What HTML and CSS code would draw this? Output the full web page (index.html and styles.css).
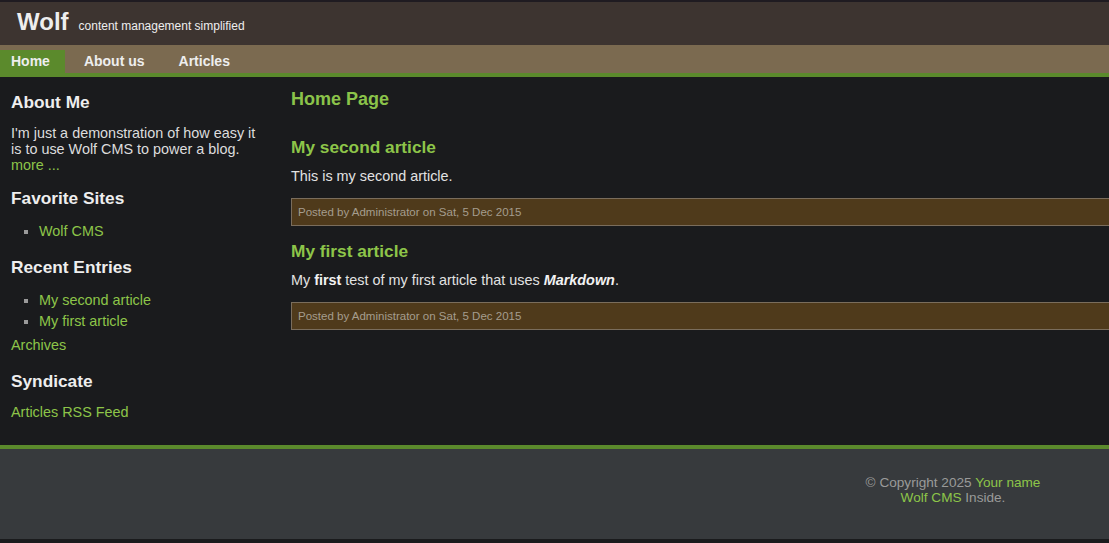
FILE: index.html
```html
<!DOCTYPE html>
<html lang="en">
<head>
<meta charset="utf-8">
<title>Wolf - Home Page</title>
<link rel="stylesheet" href="styles.css">
</head>
<body>
<header class="header">
  <a class="logo" href="#">Wolf</a>
  <span class="tagline">content management simplified</span>
</header>
<nav class="nav">
  <a class="nav-link current" href="#">Home</a>
  <a class="nav-link" href="#">About us</a>
  <a class="nav-link" href="#">Articles</a>
</nav>
<div class="wrap">
  <aside class="sidebar">
    <h2 class="side-title first">About Me</h2>
    <p class="side-text">I'm just a demonstration of how easy it is to use Wolf CMS to power a blog.<br><a href="#">more ...</a></p>
    <h2 class="side-title">Favorite Sites</h2>
    <ul class="side-list">
      <li><a href="#">Wolf CMS</a></li>
    </ul>
    <h2 class="side-title">Recent Entries</h2>
    <ul class="side-list">
      <li><a href="#">My second article</a></li>
      <li><a href="#">My first article</a></li>
    </ul>
    <p class="side-archives"><a href="#">Archives</a></p>
    <h2 class="side-title">Syndicate</h2>
    <p class="side-text"><a href="#">Articles RSS Feed</a></p>
  </aside>
  <main class="content">
    <h1 class="page-title">Home Page</h1>
    <div class="article first">
      <h3 class="article-title"><a href="#">My second article</a></h3>
      <p class="article-body">This is my second article.</p>
      <p class="meta">Posted by Administrator on Sat, 5 Dec 2015</p>
    </div>
    <div class="article">
      <h3 class="article-title"><a href="#">My first article</a></h3>
      <p class="article-body">My <strong>first</strong> test of my first article that uses <strong><em>Markdown</em></strong>.</p>
      <p class="meta">Posted by Administrator on Sat, 5 Dec 2015</p>
    </div>
  </main>
</div>
<footer class="footer">
  <div class="footer-text">
    <div>&copy; Copyright 2025 <a href="#">Your name</a></div>
    <div><a href="#">Wolf CMS</a> Inside.</div>
  </div>
</footer>
</body>
</html>
```
FILE: styles.css
```css
html, body {
  margin: 0;
  padding: 0;
}
body {
  background: #1a1b1d;
  color: #e2e2e2;
  font-family: "Liberation Sans", Arial, sans-serif;
  font-size: 14.4px;
  overflow-x: hidden;
}
a {
  color: #8dc549;
  text-decoration: none;
}

.header {
  border-top: 2px solid #1f1b21;
  background: #3d3430;
  height: 37px;
  padding: 6px 0 0 17px;
  display: flex;
  align-items: baseline;
  gap: 10px;
}
.logo {
  color: #eeeeee;
  font-size: 24px;
  font-weight: bold;
  line-height: 28px;
}
.tagline {
  color: #eeeeee;
  font-size: 12px;
}

.nav {
  background: #7b6a50;
  height: 28px;
  border-bottom: 4px solid #5b8a2c;
  display: flex;
  align-items: flex-end;
  gap: 8px;
}
.nav-link {
  color: #eeeeee;
  font-weight: bold;
  font-size: 14px;
  line-height: 23px;
  height: 23px;
  padding: 0 15px 0 11px;
}
.nav-link.current {
  background: #5b8a2c;
}

.wrap {
  display: flex;
}
.sidebar {
  width: 248px;
  flex: none;
  padding: 15px 32px 25px 11px;
}
.side-title {
  margin: 15px 0 0;
  font-size: 17.28px;
  line-height: 21px;
  color: #eeeeee;
}
.side-title.first {
  margin-top: 0;
}
.side-text {
  margin: 12px 0 0;
  line-height: 16px;
  color: #dddddd;
}
.side-list {
  margin: 12px 0 0;
  padding-left: 28px;
  list-style: square;
  color: #9a9a9a;
}
.side-list li {
  line-height: 21px;
}
.side-archives {
  margin: 3px 0 0;
  line-height: 21px;
}

.content {
  flex: 1;
  padding-top: 12px;
}
.page-title {
  margin: 0;
  font-size: 18px;
  line-height: 21px;
  color: #8bc34a;
}
.article {
  margin-top: 15.5px;
}
.article.first {
  margin-top: 27px;
}
.article-title {
  margin: 0;
  font-size: 17.28px;
  line-height: 21px;
}
.article-body {
  margin: 10px 0 0;
  line-height: 16px;
  color: #e2e2e2;
}
.article-body strong {
  color: #f2f2f2;
}
.meta {
  margin: 13.5px 0 0;
  background: #4f3a1b;
  border: 1px solid #7a6d5c;
  border-right: none;
  font-size: 11.52px;
  line-height: 26px;
  padding-left: 6px;
  color: #a59d8e;
}

.footer {
  border-top: 4px solid #5b8a2c;
  background: #373a3d;
  height: 64px;
  padding-top: 26px;
  display: flex;
}
.footer-text {
  width: 300px;
  margin: 0 6px 0 auto;
  text-align: center;
  font-size: 13.6px;
  line-height: 15px;
  color: #9a9a9a;
}
```
